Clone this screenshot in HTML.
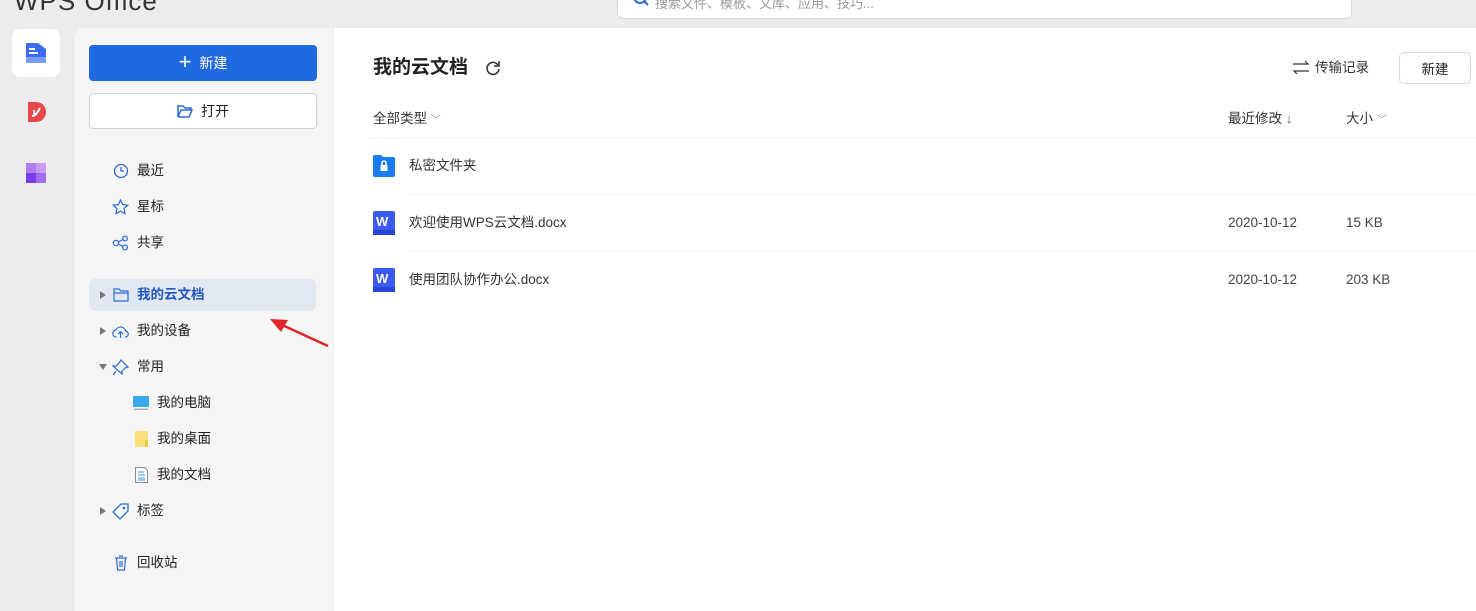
<!DOCTYPE html>
<html><head><meta charset="utf-8"><style>
*{margin:0;padding:0;box-sizing:border-box}
body{width:1476px;height:611px;overflow:hidden;background:#ecebee;font-family:"Liberation Sans","Noto Sans CJK SC",sans-serif;position:relative;color:#222;font-size:14px}
.a{position:absolute}
.side{left:73px;top:28px;width:260px;height:583px;background:#f5f5f6;border-top-left-radius:10px;border-left:1px solid #e2e2e4}
.main{left:333px;top:28px;width:1143px;height:583px;background:#fff;border-left:1px solid #eceef0}
.nav{position:absolute;font-size:13.5px;color:#222;line-height:20px;white-space:nowrap}
.tri{position:absolute;width:0;height:0;border-top:4px solid transparent;border-bottom:4px solid transparent;border-left:6px solid #777}
.line{position:absolute;height:1px;background:#eeeff1}
.t{position:absolute;font-size:13.5px;color:#333;line-height:20px;white-space:nowrap}
</style></head><body>
<div class="a" style="left:14px;top:-14px;font-size:26px;color:#333;letter-spacing:1px">WPS Office</div>
<div class="a" style="left:617px;top:-10px;width:735px;height:29px;background:#fff;border:1px solid #d6d6da;border-radius:6px"></div>
<svg class="a" style="left:632px;top:-6px" width="18" height="14"><circle cx="8" cy="3" r="6" fill="none" stroke="#2a6bd6" stroke-width="2"/><path d="M12 7l4 4" stroke="#2a6bd6" stroke-width="2"/></svg>
<div class="a" style="left:655px;top:-7px;font-size:13px;color:#999">搜索文件、模板、文库、应用、技巧...</div>

<div class="a" style="left:12px;top:29px;width:48px;height:48px;background:#fff;border-radius:8px"></div>
<svg class="a" style="left:26px;top:43px" width="20" height="20"><path d="M0 0h12l8 6v14H0z" fill="#3c6df0"/><rect x="0" y="14" width="20" height="6" fill="#7b9cf5"/><rect x="3" y="5" width="6" height="2" fill="#fff"/><rect x="3" y="9" width="9" height="2" fill="#fff"/></svg>
<svg class="a" style="left:26px;top:102px" width="20" height="20"><path d="M2 0h8a10 10 0 0 1 0 20H2z" fill="#e9474a"/><path d="M6 14q4 0 8-8M9 14q-1-3-1-6" stroke="#fff" stroke-width="2" fill="none"/></svg>
<svg class="a" style="left:26px;top:163px" width="20" height="20"><rect width="10" height="10" fill="#b07cf0"/><rect x="10" width="10" height="10" fill="#c79cf5"/><rect y="10" width="10" height="10" fill="#7b3ee8"/><rect x="10" y="10" width="10" height="10" fill="#a06ef0"/></svg>

<div class="a side"></div>
<div class="a main"></div>

<div class="a" style="left:89px;top:45px;width:228px;height:36px;background:#2169e0;border-radius:4px;color:#fff;font-size:14px;display:flex;align-items:center;justify-content:center"><span style="font-size:22px;font-weight:300;margin-right:8px;margin-top:-3px">+</span>新建</div>
<div class="a" style="left:89px;top:93px;width:228px;height:36px;background:#fff;border:1px solid #cfd2d8;border-radius:4px;color:#222;font-size:14px;display:flex;align-items:center;justify-content:center"><svg width="16" height="14" style="margin-right:8px"><path d="M1 2h5l2 2h6v2H4L1 13z M1 13h11l3-7H4" fill="none" stroke="#2a6bd6" stroke-width="1.5"/></svg>打开</div>

<svg class="a" style="left:113px;top:163px" width="16" height="16"><circle cx="8" cy="8" r="6.5" fill="none" stroke="#2a6bd6" stroke-width="1.3"/><path d="M8 4v4h3" fill="none" stroke="#2a6bd6" stroke-width="1.3"/></svg>
<div class="nav" style="left:137px;top:161px">最近</div>
<svg class="a" style="left:112px;top:199px" width="17" height="16"><path d="M8.5 1l2.2 4.6 5 .6-3.7 3.4 1 5-4.5-2.5-4.5 2.5 1-5L1.3 6.2l5-.6z" fill="none" stroke="#2a6bd6" stroke-width="1.2"/></svg>
<div class="nav" style="left:137px;top:197px">星标</div>
<svg class="a" style="left:112px;top:235px" width="17" height="16"><circle cx="4" cy="8" r="2.6" fill="none" stroke="#2a6bd6" stroke-width="1.2"/><circle cx="13" cy="3.5" r="2.4" fill="none" stroke="#2a6bd6" stroke-width="1.2"/><circle cx="13" cy="12.5" r="2.4" fill="none" stroke="#2a6bd6" stroke-width="1.2"/><path d="M6.3 7l4.5-2.5M6.3 9l4.5 2.5" stroke="#2a6bd6" stroke-width="1.2"/></svg>
<div class="nav" style="left:137px;top:233px">共享</div>

<div class="a" style="left:89px;top:279px;width:227px;height:32px;background:#e2e8f2;border-radius:6px"></div>
<div class="tri" style="left:100px;top:291px"></div>
<svg class="a" style="left:113px;top:288px" width="16" height="14"><path d="M1 1h5l2 2h7v10H1z M1 5h14" fill="none" stroke="#2a6bd6" stroke-width="1.2"/></svg>
<div class="nav" style="left:137px;top:285px;color:#1f56c2;font-weight:bold">我的云文档</div>
<div class="tri" style="left:100px;top:327px"></div>
<svg class="a" style="left:112px;top:324px" width="17" height="15"><path d="M4.5 13A3.5 3.5 0 0 1 4 6a5 5 0 0 1 9.5 1A3 3 0 0 1 13 13" fill="none" stroke="#2a6bd6" stroke-width="1.2"/><path d="M8.5 14V8M6 10l2.5-2.5L11 10" fill="none" stroke="#2a6bd6" stroke-width="1.2"/></svg>
<div class="nav" style="left:137px;top:321px">我的设备</div>
<div class="a" style="left:99px;top:364px;width:0;height:0;border-left:4px solid transparent;border-right:4px solid transparent;border-top:6px solid #777"></div>
<svg class="a" style="left:112px;top:359px" width="17" height="17"><path d="M9 1l7 7-3 1-3 3v3L1 7h3l3-3z M4 12l-3 4" fill="none" stroke="#2a6bd6" stroke-width="1.2"/></svg>
<div class="nav" style="left:137px;top:357px">常用</div>
<svg class="a" style="left:133px;top:396px" width="16" height="15"><rect width="16" height="11" rx="1" fill="#3aa8ef"/><rect x="1" y="12.5" width="14" height="1.5" fill="#aab"/></svg>
<div class="nav" style="left:157px;top:393px">我的电脑</div>
<svg class="a" style="left:135px;top:431px" width="13" height="16"><rect width="13" height="16" rx="1" fill="#fddf7a"/><rect x="10" y="9" width="3" height="7" fill="#f2c44a"/></svg>
<div class="nav" style="left:157px;top:429px">我的桌面</div>
<svg class="a" style="left:135px;top:467px" width="13" height="16"><path d="M.5.5h9l3 3v12H.5z" fill="#fff" stroke="#889"/><path d="M3 5h6M3 8h7M3 11h7M3 13h7" stroke="#3a9be0"/></svg>
<div class="nav" style="left:157px;top:465px">我的文档</div>
<div class="tri" style="left:100px;top:507px"></div>
<svg class="a" style="left:112px;top:503px" width="17" height="17"><path d="M9 1h7v7l-8 8-7-7z" fill="none" stroke="#2a6bd6" stroke-width="1.3"/><circle cx="12" cy="5" r="1.3" fill="#2a6bd6"/></svg>
<div class="nav" style="left:137px;top:501px">标签</div>
<svg class="a" style="left:114px;top:555px" width="14" height="16"><path d="M1 3h12M5 1h4M2.5 3l1 12h7l1-12M6 6v6M8 6v6" fill="none" stroke="#2a6bd6" stroke-width="1.2"/></svg>
<div class="nav" style="left:137px;top:553px">回收站</div>

<svg class="a" style="left:266px;top:314px" width="66" height="36"><path d="M62 32L14 10" stroke="#e0242a" stroke-width="2.5"/><path d="M4 5l18 1-7 12z" fill="#e0242a"/></svg>

<div class="a" style="left:373px;top:55px;font-size:19px;font-weight:bold;color:#222;line-height:26px">我的云文档</div>
<svg class="a" style="left:485px;top:60px" width="16" height="16"><path d="M13 5A6 6 0 1 0 14 9" fill="none" stroke="#333" stroke-width="1.6"/><path d="M14 1v5H9" fill="none" stroke="#333" stroke-width="1.6"/></svg>
<svg class="a" style="left:1292px;top:60px" width="18" height="15"><path d="M1 4h15l-3-3M17 11H2l3 3" fill="none" stroke="#333" stroke-width="1.2"/></svg>
<div class="t" style="left:1315px;top:58px">传输记录</div>
<div class="a" style="left:1399px;top:52px;width:72px;height:32px;border:1px solid #d8d8dc;border-radius:5px;font-size:13.5px;display:flex;align-items:center;justify-content:center">新建</div>

<div class="t" style="left:373px;top:109px">全部类型 <span style="font-size:10px;color:#888">﹀</span></div>
<div class="t" style="left:1228px;top:109px">最近修改 <span style="color:#555">↓</span></div>
<div class="t" style="left:1346px;top:109px">大小 <span style="font-size:10px;color:#888">﹀</span></div>
<div class="line" style="left:368px;top:137px;width:1108px"></div>

<svg class="a" style="left:373px;top:155px" width="22" height="22"><path d="M0 2a2 2 0 0 1 2-2h6l2 2h10a2 2 0 0 1 2 2v16a2 2 0 0 1-2 2H2a2 2 0 0 1-2-2z" fill="#1a7af0"/><rect x="7.5" y="10" width="7" height="6" fill="#fff"/><path d="M9 10V8a2 2 0 0 1 4 0v2" fill="none" stroke="#fff" stroke-width="1.5"/></svg>
<div class="t" style="left:409px;top:156px">私密文件夹</div>
<div class="line" style="left:409px;top:194px;width:1067px"></div>

<svg class="a" style="left:373px;top:211px" width="22" height="24"><rect width="22" height="24" rx="2" fill="#3b5bf0"/><rect y="19" width="22" height="5" fill="#2a44d8"/><text x="3" y="15" font-family="Liberation Sans" font-weight="bold" font-size="13" fill="#fff">W</text></svg>
<div class="t" style="left:409px;top:213px">欢迎使用WPS云文档.docx</div>
<div class="t" style="left:1228px;top:213px;color:#444">2020-10-12</div>
<div class="t" style="left:1346px;top:213px;color:#444">15 KB</div>
<div class="line" style="left:409px;top:251px;width:1067px"></div>

<svg class="a" style="left:373px;top:268px" width="22" height="24"><rect width="22" height="24" rx="2" fill="#3b5bf0"/><rect y="19" width="22" height="5" fill="#2a44d8"/><text x="3" y="15" font-family="Liberation Sans" font-weight="bold" font-size="13" fill="#fff">W</text></svg>
<div class="t" style="left:409px;top:270px">使用团队协作办公.docx</div>
<div class="t" style="left:1228px;top:270px;color:#444">2020-10-12</div>
<div class="t" style="left:1346px;top:270px;color:#444">203 KB</div>
</body></html>
